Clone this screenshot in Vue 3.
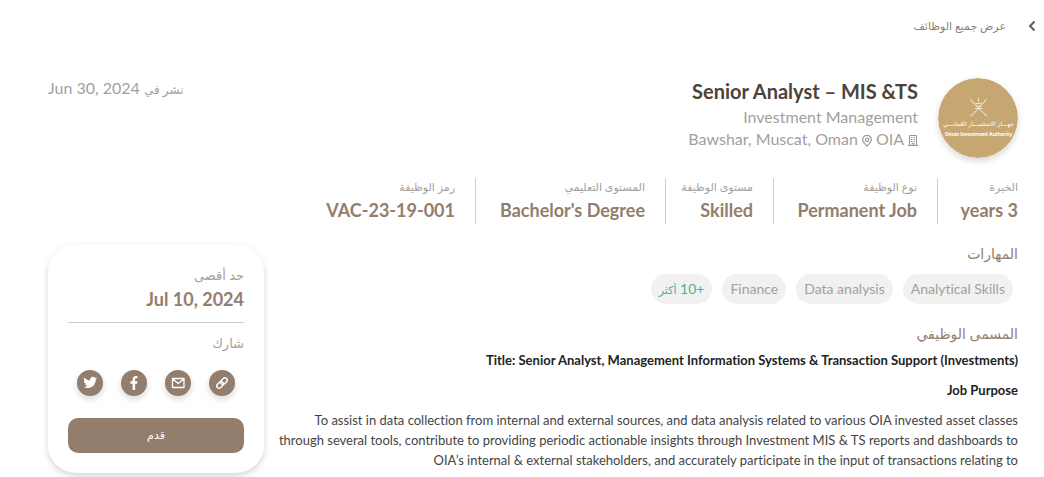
<script setup>
const facts = [
  { label: 'الخبرة', value: '3 years' },
  { label: 'نوع الوظيفة', value: 'Permanent Job' },
  { label: 'مستوى الوظيفة', value: 'Skilled' },
  { label: 'المستوى التعليمي', value: "Bachelor's Degree" },
  { label: 'رمز الوظيفة', value: 'VAC-23-19-001', ltr: true },
]
const skills = ['Analytical Skills', 'Data analysis', 'Finance']
const lines = [
  'To assist in data collection from internal and external sources, and data analysis related to various OIA invested asset classes',
  'through several tools, contribute to providing periodic actionable insights through Investment MIS & TS reports and dashboards to',
  'OIA’s internal & external stakeholders, and accurately participate in the input of transactions relating to',
]
</script>

<template>
  <div class="page" dir="rtl" lang="ar">
    <a class="back" href="#">
      <svg width="8" height="12" viewBox="0 0 8 12" aria-hidden="true"><path d="M6.500 1.500 2 6l4.500 4.500" fill="none" stroke="#6f5c4e" stroke-width="2" /></svg>
      <span>عرض جميع الوظائف</span>
    </a>

    <header class="head">
      <svg class="logo" viewBox="0 0 80 80" role="img" aria-label="Oman Investment Authority">
        <circle cx="40" cy="40" r="40" fill="#c7a771" />
        <g fill="none" stroke="#fff" stroke-linecap="round">
          <path d="M33 22.500 48.500 38M47.500 22.500 33.500 38" stroke-width="1" opacity=".75" />
          <path d="M40.500 20v4M37.500 25.500h6M38.500 28h4.500M37 30.500h7" stroke-width="1.200" opacity=".65" />
          <path d="M32.500 20.500q.5 3 3 4M48.500 20.500q-.5 3-3 4M34 36l-2 1M47 36l2 1.500" stroke-width=".7" opacity=".6" />
        </g>
        <text class="logo-ar" x="40.500" y="48" text-anchor="middle" direction="rtl">جهـــاز الاستثمـــار العُمانـــي</text>
        <text class="logo-en" x="40.500" y="58" text-anchor="middle" direction="ltr">Oman Investment Authority</text>
      </svg>
      <div class="summary">
        <h1 dir="ltr">Senior Analyst – MIS &amp;TS</h1>
        <p>Investment Management</p>
        <p class="place">
          <svg width="10" height="11" viewBox="0 0 10 11" aria-hidden="true"><path d="M1.500 10.500v-10h7v10M0 10.500h10M4 10.500v-2h2v2M3 2.500h1.500M5.500 2.500H7M3 4.500h1.500M5.500 4.500H7M3 6.500h1.500M5.500 6.500H7" fill="none" stroke="#979592" /></svg>
          <span>OIA</span>
          <svg width="10" height="12" viewBox="0 0 10 12" aria-hidden="true"><path d="M5 11.200C3 9 .7 7 .7 4.700a4.300 4.300 0 0 1 8.600 0C9.300 7 7 9 5 11.200Z" fill="none" stroke="#979592" stroke-width="1.200" /><circle cx="5" cy="4.700" r="1.700" fill="none" stroke="#979592" stroke-width="1.100" /></svg>
          <span>Bawshar, Muscat, Oman</span>
        </p>
      </div>
      <p class="posted"><span class="ar">نشر في</span> Jun 30, 2024</p>
    </header>

    <dl class="facts">
      <div v-for="f in facts" :key="f.label" class="fact">
        <dt>{{ f.label }}</dt>
        <dd><bdi v-if="f.ltr" dir="ltr">{{ f.value }}</bdi><template v-else>{{ f.value }}</template></dd>
      </div>
    </dl>

    <div class="columns">
      <main>
        <h2>المهارات</h2>
        <ul class="skills">
          <li v-for="s in skills" :key="s">{{ s }}</li>
          <li><button type="button" class="more">+10 <span>أكثر</span></button></li>
        </ul>
        <h2>المسمى الوظيفي</h2>
        <div class="body" dir="ltr">
          <p class="strong">Title: Senior Analyst, Management Information Systems &amp; Transaction Support (Investments)</p>
          <p class="strong">Job Purpose</p>
          <p><template v-for="(l, i) in lines" :key="i"><br v-if="i">{{ l }}</template></p>
        </div>
      </main>

      <aside class="card">
        <p class="card-label">حد أقصى</p>
        <p class="deadline" dir="ltr">Jul 10, 2024</p>
        <p class="card-label share">شارك</p>
        <div class="social">
          <a href="#" aria-label="Copy link"><svg viewBox="0 0 26 26"><g fill="none" stroke="#fff" stroke-width="1.400" transform="rotate(-45 13 13)"><rect x="6.600" y="10.700" width="7.400" height="4.600" rx="2.300" /><rect x="12" y="10.700" width="7.400" height="4.600" rx="2.300" /></g></svg></a>
          <a href="#" aria-label="Email"><svg viewBox="0 0 26 26"><path d="M7.500 8.500h11.500v9H7.500ZM7.500 8.800l5.750 4.700L19 8.800" fill="none" stroke="#fff" stroke-width="1.300" stroke-linejoin="round" /></svg></a>
          <a href="#" aria-label="Facebook"><svg viewBox="0 0 26 26"><path d="M11.600 20v-6.300H9.400v-2.500h2.200V9.400c0-2.200 1.300-3.400 3.200-3.400.8 0 1.500.1 1.700.1v2.200h-1.200c-.9 0-1.200.5-1.200 1.200v1.700h2.300l-.3 2.500h-2V20Z" fill="#fff" /></svg></a>
          <a href="#" aria-label="Twitter"><svg viewBox="0 0 24 24"><path transform="translate(5.800 5.200) scale(.53)" d="M23.950 4.570a10 10 0 0 1-2.820.77 4.960 4.960 0 0 0 2.160-2.720c-.95.550-2 .95-3.130 1.180a4.920 4.920 0 0 0-8.380 4.480C7.690 8.090 4.070 6.130 1.640 3.160a4.820 4.820 0 0 0-.67 2.470c0 1.710.87 3.210 2.190 4.100a4.900 4.900 0 0 1-2.230-.62v.06a4.920 4.920 0 0 0 3.950 4.830 5 5 0 0 1-2.210.08 4.940 4.940 0 0 0 4.600 3.420A9.870 9.870 0 0 1 0 19.540a13.990 13.990 0 0 0 7.560 2.210c9.050 0 14-7.500 14-13.980 0-.21 0-.42-.02-.63a9.940 9.940 0 0 0 2.460-2.550Z" fill="#fff" /></svg></a>
        </div>
        <button type="button" class="apply">قدم</button>
      </aside>
    </div>
  </div>
</template>

<style>
body { margin: 0; background: #fff; }
</style>

<style scoped>
.page {
  font-family: "Lato", "DejaVu Sans", sans-serif;
  font-size: 16px;
  color: #a2a09e;
  padding: 13px 26px 0 48px;
}
p, h1, h2, dl, dd, ul { margin: 0; padding: 0; }
.back {
  display: flex;
  align-items: center;
  gap: 22px;
  width: fit-content;
  margin-right: -18px;
  height: 26px;
  color: #937d6c;
  font-size: 11px;
  text-decoration: none;
}
.back svg { flex: none; }
.head { display: flex; margin-top: 39px; height: 84px; }
.logo {
  flex: none;
  width: 80px;
  height: 80px;
  border-radius: 50%;
  box-shadow: 0 3px 6px rgba(0, 0, 0, .16);
}
.logo-ar { font: 6px "DejaVu Sans", sans-serif; fill: #fff; }
.logo-en { font: bold 5px "Inter", sans-serif; fill: #fff; }
.summary { margin-right: 20px; line-height: 22px; }
.summary p { text-align: right; }
h1 { font-size: 20px; line-height: 24px; font-weight: 700; color: #4c433a; text-align: right; margin: 1px 0 3px; }
.place { display: flex; align-items: center; gap: 4px; }
.place svg { margin-top: 3px; }
.posted { margin-right: auto; line-height: 20px; }
.ar { font-size: 12px; }
.facts { display: grid; grid-template-columns: 81px 164px 108px 190px auto; justify-content: start; margin-top: 16px; white-space: nowrap; }
.fact { padding: 0 20px; height: 46px; border-left: 1px solid #ccc; }
.fact:first-child { padding-right: 0; }
.fact:last-child { border: 0; }
dt { font-size: 11px; line-height: 18px; }
dd { font-size: 18px; font-weight: 700; line-height: 28px; color: #937d6c; }
.columns { display: grid; grid-template-columns: minmax(0, 1fr) 216px; margin-top: 20px; align-items: start; }
h2 { font-size: 14px; font-weight: 400; line-height: 20px; color: #937d6c; }
.skills { display: flex; gap: 10px; list-style: none; margin: 10px 5px 20px; font-variant-ligatures: none; }
.skills li { height: 30px; line-height: 29px; padding: 0 8px; border-radius: 15px; background: #f1f1f1; font-size: 14px; }
.more { border: 0; padding: 0; background: none; font: inherit; color: #4cb28a; }
.more span { font-size: 11px; }
.body { text-align: right; font-size: 13px; line-height: 20px; color: #444; white-space: nowrap; margin-top: 6px; font-variant-ligatures: none; }
.body p { margin-bottom: 10px; }
.body .strong { font-weight: 700; color: #222; }
.card {
  box-sizing: border-box;
  padding: 20px;
  border-radius: 28px;
  background: #fff;
  box-shadow: 0 3px 6px rgba(0, 0, 0, .16);
}
.card-label { font-size: 13px; line-height: 22px; }
.deadline { text-align: right; font-size: 18px; font-weight: 700; line-height: 26px; color: #937d6c; margin-bottom: 10px; }
.share { border-top: 1px solid #ccc; padding-top: 9px; }
.social { display: flex; justify-content: space-around; margin: 16px 0 22px; }
.social a { width: 26px; height: 26px; border-radius: 50%; background: #937d6c; box-shadow: 0 3px 6px rgba(0, 0, 0, .16); }
.social svg { display: block; width: 26px; height: 26px; }
.apply { display: block; width: 100%; height: 35px; border: 0; border-radius: 10px; background: #937d6c; color: #fff; font: 11px "DejaVu Sans", sans-serif; }
</style>
